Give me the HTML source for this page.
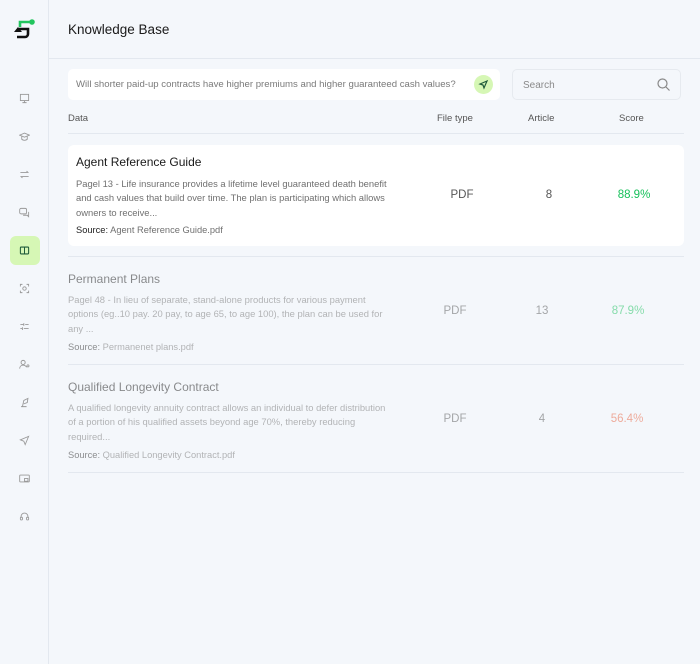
<!DOCTYPE html>
<html><head><style>
*{margin:0;padding:0;box-sizing:border-box}
body{width:700px;height:664px;background:#f4f7fb;font-family:"Liberation Sans",sans-serif;position:relative;overflow:hidden;color:#222}
.sb{position:absolute;left:0;top:0;width:49px;height:664px;border-right:1px solid #e3e8ef;background:#f4f7fb}
.ic{position:absolute;left:19px;width:11px;height:11px}
.act{position:absolute;left:10px;top:236px;width:30px;height:29px;background:#d6f7b5;border-radius:6px}
.hdr{position:absolute;left:49px;top:0;right:0;height:59px;border-bottom:1px solid #e3e8ef}
.hdr span{position:absolute;left:19px;top:22px;font-size:13.5px;color:#1a1a1a}
.q{position:absolute;left:68px;top:69px;width:432px;height:31px;background:#fff;border-radius:5px;font-size:9.6px;color:#7a7a7a;padding:10px 8px}
.send{position:absolute;left:474px;top:75px;width:19px;height:19px;border-radius:50%;background:#d6f7b5}
.s{position:absolute;left:512px;top:69px;width:169px;height:31px;border:1px solid #e6eaef;border-radius:5px;font-size:10px;color:#8a8a8a;padding:10px 10px}
.th{position:absolute;top:113px;font-size:9.5px;color:#555}
.line{position:absolute;left:68px;width:616px;height:1px;background:#e3e8ef}
.row{position:absolute;left:68px;width:616px;height:101px}
.card{background:#fff;border-radius:6px}
.t{position:absolute;left:8px;top:10px;font-size:12px;color:#1a1a1a}
.d{position:absolute;left:8px;top:32px;width:322px;font-size:9.4px;line-height:14.3px;color:#707070}
.src{position:absolute;left:8px;top:80px;font-size:9.3px;color:#707070}
.src b{font-weight:normal;color:#222}
.c{position:absolute;top:45px;font-size:11.5px;color:#555;text-align:center;width:60px}
.faded{opacity:.5}
.faded .t{left:0;top:5px}
.faded .d{left:0;top:26px}
.faded .src{left:0;top:75px}
</style></head><body>
<div class="sb">
<svg style="position:absolute;left:13px;top:18px" width="24" height="22" viewBox="0 0 24 22" fill="none"><path d="M7 9V4h11" stroke="#22c55e" stroke-width="2.6"/><circle cx="19" cy="4" r="2.8" fill="#22c55e"/><path d="M6 11h9v5a3 3 0 0 1-3 3H4" stroke="#111" stroke-width="2.6"/><path d="M1 14l4-5 4 5z" fill="#111"/></svg>
<div class="act"></div>
<svg class="ic" style="top:93px" viewBox="0 0 16 16" fill="none" stroke="#999" stroke-width="1.3"><rect x="2" y="2" width="12" height="9"/><path d="M8 11v3M5 14h6"/></svg>
<svg class="ic" style="top:131px" viewBox="0 0 16 16" fill="none" stroke="#999" stroke-width="1.3"><path d="M1 6l7-3 7 3-7 3z"/><path d="M4 8v4c2 2 6 2 8 0V8"/></svg>
<svg class="ic" style="top:169px" viewBox="0 0 16 16" fill="none" stroke="#999" stroke-width="1.3"><path d="M2 5h11l-2-2M14 11H3l2 2"/></svg>
<svg class="ic" style="top:207px" viewBox="0 0 16 16" fill="none" stroke="#999" stroke-width="1.3"><rect x="1" y="2" width="10" height="8" rx="2"/><path d="M6 12h6l2 2V7"/></svg>
<svg class="ic" style="top:245px" viewBox="0 0 16 16" fill="none" stroke="#1e5a3a" stroke-width="1.5"><rect x="2" y="3" width="12" height="10" rx="1"/><path d="M8 3v10"/></svg>
<svg class="ic" style="top:283px" viewBox="0 0 16 16" fill="none" stroke="#999" stroke-width="1.3"><path d="M2 5V2h3M11 2h3v3M14 11v3h-3M5 14H2v-3"/><circle cx="8" cy="8" r="2.5"/></svg>
<svg class="ic" style="top:321px" viewBox="0 0 16 16" fill="none" stroke="#999" stroke-width="1.3"><path d="M2 5h5M9 5h5M2 11h3M7 11h7M7 3v4M5 9v4"/></svg>
<svg class="ic" style="top:359px" viewBox="0 0 16 16" fill="none" stroke="#999" stroke-width="1.3"><circle cx="6" cy="5" r="3"/><path d="M1 14c0-3 2-5 5-5s4 1 5 3"/><circle cx="13" cy="10" r="1.5"/></svg>
<svg class="ic" style="top:397px" viewBox="0 0 16 16" fill="none" stroke="#999" stroke-width="1.3"><path d="M3 14h8M5 14l2-9 6-3-1 6-5 2"/></svg>
<svg class="ic" style="top:435px" viewBox="0 0 16 16" fill="none" stroke="#999" stroke-width="1.3"><path d="M14 2L2 7l5 2 2 5z"/></svg>
<svg class="ic" style="top:473px" viewBox="0 0 16 16" fill="none" stroke="#999" stroke-width="1.3"><rect x="1" y="3" width="14" height="10" rx="1"/><rect x="8" y="8" width="5" height="4"/></svg>
<svg class="ic" style="top:511px" viewBox="0 0 16 16" fill="none" stroke="#999" stroke-width="1.3"><path d="M3 10V8a5 5 0 0 1 10 0v2"/><rect x="2" y="9" width="3" height="4" rx="1"/><rect x="11" y="9" width="3" height="4" rx="1"/></svg>
</div>
<div class="hdr"><span>Knowledge Base</span></div>
<div class="q">Will shorter paid-up contracts have higher premiums and higher guaranteed cash values?</div>
<div class="send"><svg width="19" height="19" viewBox="0 0 19 19" fill="none" stroke="#1e5a3a" stroke-width="1.2"><path d="M13 6L6 9l3 1 1 3z"/></svg></div>
<div class="s">Search<svg style="position:absolute;right:10px;top:8px" width="13" height="13" viewBox="0 0 13 13" fill="none" stroke="#888" stroke-width="1.2"><circle cx="5.5" cy="5.5" r="4.5"/><path d="M9 9l3.5 3.5"/></svg></div>
<div class="th" style="left:68px">Data</div>
<div class="th" style="left:437px">File type</div>
<div class="th" style="left:528px">Article</div>
<div class="th" style="left:619px">Score</div>
<div class="line" style="top:133px"></div>
<div class="row card" style="top:145px">
<div class="t">Agent Reference Guide</div>
<div class="d">Pagel 13 - Life insurance provides a lifetime level guaranteed death benefit and cash values that build over time. The plan is participating which allows owners to receive...</div>
<div class="src"><b>Source:</b> Agent Reference Guide.pdf</div>
<div class="c" style="left:364px;top:44px">PDF</div>
<div class="c" style="left:451px;top:44px">8</div>
<div class="c" style="left:536px;top:44px;color:#16c05a">88.9%</div>
</div>
<div class="line" style="top:256px"></div>
<div class="row faded" style="top:267px">
<div class="t">Permanent Plans</div>
<div class="d">Pagel 48 - In lieu of separate, stand-alone products for various payment options (eg..10 pay. 20 pay, to age 65, to age 100), the plan can be used for any ...</div>
<div class="src"><b>Source:</b> Permanenet plans.pdf</div>
<div class="c" style="left:357px;top:38px">PDF</div>
<div class="c" style="left:444px;top:38px">13</div>
<div class="c" style="left:530px;top:38px;color:#16c05a">87.9%</div>
</div>
<div class="line" style="top:364px"></div>
<div class="row faded" style="top:375px">
<div class="t">Qualified Longevity Contract</div>
<div class="d">A qualified longevity annuity contract allows an individual to defer distribution of a portion of his qualified assets beyond age 70%, thereby reducing required...</div>
<div class="src"><b>Source:</b> Qualified Longevity Contract.pdf</div>
<div class="c" style="left:357px;top:38px">PDF</div>
<div class="c" style="left:444px;top:38px">4</div>
<div class="c" style="left:529px;top:38px;color:#e8603c">56.4%</div>
</div>
<div class="line" style="top:472px"></div>
</body></html>
